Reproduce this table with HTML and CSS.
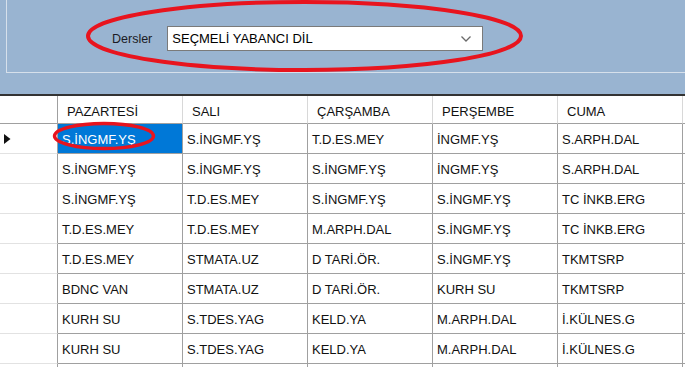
FILE: index.html
```html
<!DOCTYPE html>
<html>
<head>
<meta charset="utf-8">
<link rel="stylesheet" href="styles.css">
</head>
<body>
<div class="top">
  <div class="groupbox">
    <div class="field">
      <span class="label">Dersler</span>
      <div class="combo">
        <span class="combo-text">SEÇMELİ YABANCI DİL</span>
        <svg class="chev" width="10" height="6" viewBox="0 0 10 6"><path d="M0.5 0.5 L5 5 L9.5 0.5" fill="none" stroke="#6a6a6a" stroke-width="1.3"/></svg>
      </div>
    </div>
  </div>
  <svg class="mark-big" width="685" height="80" viewBox="0 0 685 80"><ellipse cx="304.5" cy="36" rx="216.5" ry="34" fill="none" stroke="#e8141e" stroke-width="4"/></svg>
</div>
<div class="divider"></div>
<div class="gridwrap">
<div class="grid">
  <div class="hc corner"></div>
  <div class="hc">PAZARTESİ</div>
  <div class="hc">SALI</div>
  <div class="hc">ÇARŞAMBA</div>
  <div class="hc">PERŞEMBE</div>
  <div class="hc">CUMA</div>
  <div class="hc rest"></div>

  <div class="rh"><svg width="7" height="10" viewBox="0 0 7 10"><path d="M0 0 L6.5 5 L0 10 Z" fill="#111"/></svg></div>
  <div class="c sel">S.İNGMF.YŞ</div><div class="c">S.İNGMF.YŞ</div><div class="c">T.D.ES.MEY</div><div class="c">İNGMF.YŞ</div><div class="c">S.ARPH.DAL</div><div class="c rest"></div>

  <div class="rh"></div>
  <div class="c">S.İNGMF.YŞ</div><div class="c">S.İNGMF.YŞ</div><div class="c">S.İNGMF.YŞ</div><div class="c">İNGMF.YŞ</div><div class="c">S.ARPH.DAL</div><div class="c rest"></div>

  <div class="rh"></div>
  <div class="c">S.İNGMF.YŞ</div><div class="c">T.D.ES.MEY</div><div class="c">S.İNGMF.YŞ</div><div class="c">S.İNGMF.YŞ</div><div class="c">TC İNKB.ERG</div><div class="c rest"></div>

  <div class="rh"></div>
  <div class="c">T.D.ES.MEY</div><div class="c">T.D.ES.MEY</div><div class="c">M.ARPH.DAL</div><div class="c">S.İNGMF.YŞ</div><div class="c">TC İNKB.ERG</div><div class="c rest"></div>

  <div class="rh"></div>
  <div class="c">T.D.ES.MEY</div><div class="c">STMATA.UZ</div><div class="c">D TARİ.ÖR.</div><div class="c">S.İNGMF.YŞ</div><div class="c">TKMTSRP</div><div class="c rest"></div>

  <div class="rh"></div>
  <div class="c">BDNC VAN</div><div class="c">STMATA.UZ</div><div class="c">D TARİ.ÖR.</div><div class="c">KURH SU</div><div class="c">TKMTSRP</div><div class="c rest"></div>

  <div class="rh"></div>
  <div class="c">KURH SU</div><div class="c">S.TDES.YAG</div><div class="c">KELD.YA</div><div class="c">M.ARPH.DAL</div><div class="c">İ.KÜLNES.G</div><div class="c rest"></div>

  <div class="rh"></div>
  <div class="c">KURH SU</div><div class="c">S.TDES.YAG</div><div class="c">KELD.YA</div><div class="c">M.ARPH.DAL</div><div class="c">İ.KÜLNES.G</div><div class="c rest"></div>

  <div class="rh last"></div>
  <div class="c last"></div><div class="c last"></div><div class="c last"></div><div class="c last"></div><div class="c last"></div><div class="c rest last"></div>
</div>
<svg class="mark-small" width="110" height="34" viewBox="0 0 110 34"><ellipse cx="52" cy="15" rx="49.5" ry="12.5" fill="none" stroke="#e8141e" stroke-width="3.4"/></svg>
</div>
</body>
</html>
```

FILE: styles.css
```css
html, body {
  margin: 0;
  padding: 0;
}
body {
  width: 685px;
  height: 367px;
  overflow: hidden;
  background: #99b4d1;
  font-family: "Liberation Sans", Arial, sans-serif;
  font-size: 13px;
  color: #111;
}
.top {
  position: relative;
  height: 94px;
}
.groupbox {
  margin-left: 6px;
  height: 73px;
  border-left: 1px solid #d6e0eb;
  border-bottom: 1px solid #d6e0eb;
  box-sizing: border-box;
  padding-top: 26px;
  padding-left: 105px;
}
.field {
  display: flex;
  align-items: center;
  gap: 15px;
}
.label {
  font-size: 12.5px;
  color: #1b1b25;
}
.combo {
  width: 316px;
  height: 25px;
  box-sizing: border-box;
  background: #fff;
  border: 1px solid #7a7a7a;
  display: flex;
  align-items: center;
  justify-content: space-between;
  padding: 0 11px 0 4px;
}
.combo-text {
  color: #000;
}
.mark-big {
  position: absolute;
  left: 0;
  top: 0;
}
.divider {
  height: 2px;
  background: #333;
}
.gridwrap {
  position: relative;
}
.grid {
  display: grid;
  grid-template-columns: 58px repeat(5, 125px) 1fr;
  grid-template-rows: 28px repeat(8, 30px) 3px;
  background: #fff;
}
.hc {
  box-sizing: border-box;
  border-right: 1px solid #d8d8d8;
  border-bottom: 1px solid #a0a0a0;
  padding: 3px 0 0 9px;
  display: flex;
  align-items: center;
  background: #fff;
  color: #111;
}
.hc.corner {
  border-right: 1px solid #a0a0a0;
}
.rh {
  box-sizing: border-box;
  border-right: 1px solid #a0a0a0;
  border-bottom: 1px solid #e2e2e2;
  display: flex;
  align-items: center;
  padding: 1px 0 0 4px;
}
.c {
  box-sizing: border-box;
  border-right: 1px solid #a0a0a0;
  border-bottom: 1px solid #a0a0a0;
  padding: 2px 0 0 4px;
  display: flex;
  align-items: center;
  white-space: nowrap;
}
.last {
  border-bottom: none;
  padding: 0;
}
.c.sel {
  background: #0078d7;
  color: #fff;
}
.rest {
  border-right: none;
}
.mark-small {
  position: absolute;
  left: 52px;
  top: 25px;
  width: 110px;
  height: 34px;
}
```
